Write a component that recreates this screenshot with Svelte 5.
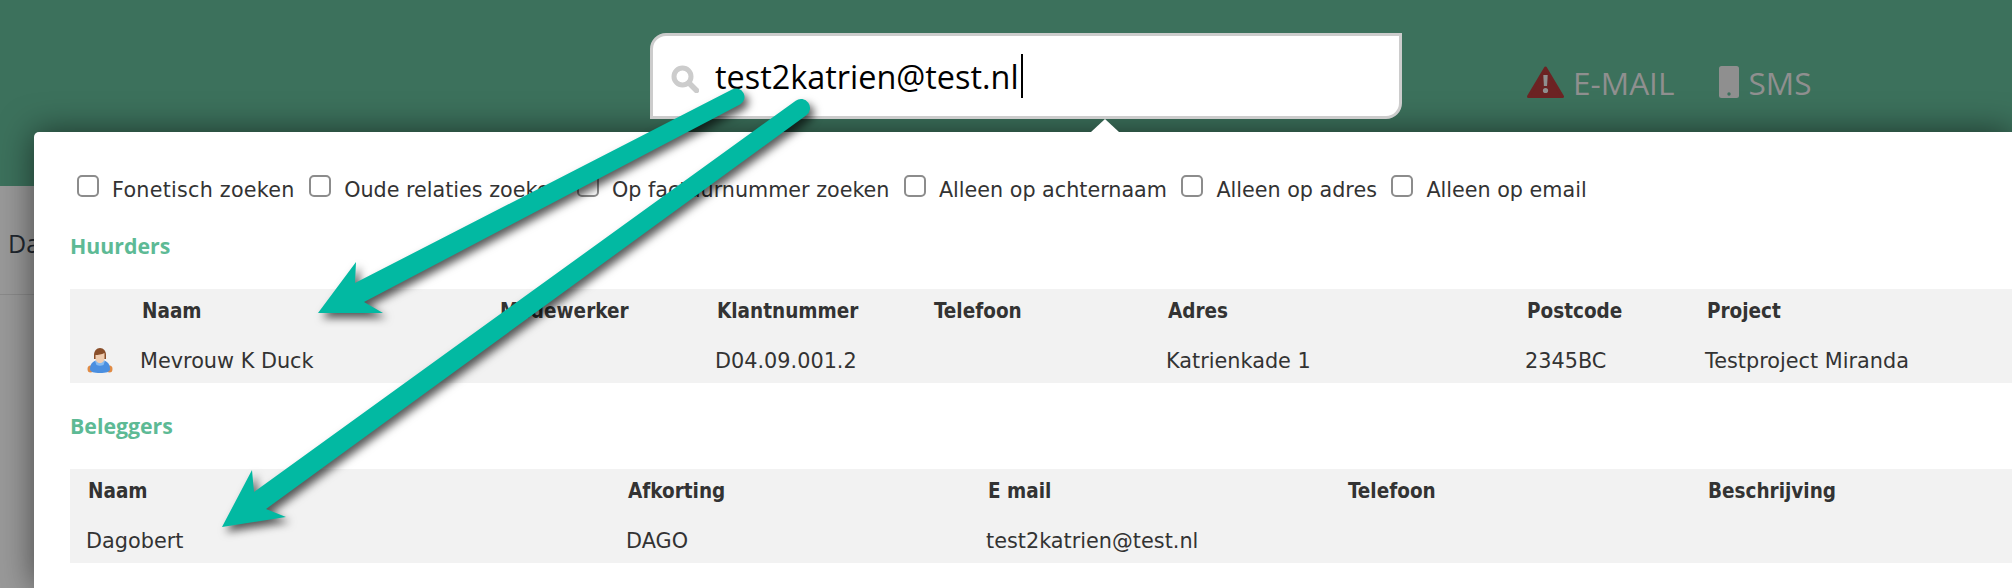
<script>
  const options = [
    'Fonetisch zoeken',
    'Oude relaties zoeken',
    'Op factuurnummer zoeken',
    'Alleen op achternaam',
    'Alleen op adres',
    'Alleen op email',
  ];
  const huurders = ['Naam', 'Medewerker', 'Klantnummer', 'Telefoon', 'Adres', 'Postcode', 'Project'];
  const huurder = ['Mevrouw K Duck', '', 'D04.09.001.2', '', 'Katrienkade 1', '2345BC', 'Testproject Miranda'];
  const beleggers = ['Naam', 'Afkorting', 'E mail', 'Telefoon', 'Beschrijving'];
  const belegger = ['Dagobert', 'DAGO', 'test2katrien@test.nl', '', ''];
</script>

<div class="page">
  <header>
    <div class="search">
      <svg class="loupe" viewBox="0 0 28 28" width="28" height="28">
        <circle cx="11.5" cy="11.5" r="8.5" fill="none" stroke="#ccc" stroke-width="5" />
        <path d="M18 18l7.5 7.5" stroke="#ccc" stroke-width="5.5" stroke-linecap="round" />
      </svg>
      <span class="query">test2katrien@test.nl</span><span class="caret"></span>
    </div>
    <div class="alerts">
      <span class="alert">
        <svg viewBox="0 0 37 32" width="37" height="32">
          <path d="M18.5 2L35.5 30.5H1.5z" fill="#6c2323" stroke="#6c2323" stroke-width="3" stroke-linejoin="round" />
          <path d="M16.3 9h4.4l-.6 11h-3.2z" fill="#8f8f8f" />
          <circle cx="18.5" cy="24.5" r="2.6" fill="#8f8f8f" />
        </svg>
        E-MAIL
      </span>
      <span class="alert">
        <svg viewBox="0 0 20 32" width="20" height="32">
          <rect width="20" height="32" rx="2.5" fill="#8f8f8f" />
          <circle cx="10" cy="28" r="1.7" fill="#3c705c" />
        </svg>
        SMS
      </span>
    </div>
  </header>

  <div class="below">
    <div class="crumb">Da</div>
  </div>

  <div class="panel">
    <div class="options">
      {#each options as option}
        <label><input type="checkbox" /><span>{option}</span></label>
      {/each}
    </div>

    <h3 class="first">Huurders</h3>
    <div class="table">
      <div class="row head huurders">
        <span></span>
        {#each huurders as cell}<span>{cell}</span>{/each}
      </div>
      <div class="row huurders">
        <span class="person">
          <svg viewBox="0 0 26 26" width="26" height="26">
            <ellipse cx="3.500" cy="21" rx="3" ry="3.500" fill="#e08b45" />
            <ellipse cx="22.500" cy="21" rx="3" ry="3.500" fill="#e08b45" />
            <path d="M3 21c0-6 4-9 10-9s10 3 10 9c0 3-4 4-10 4s-10-1-10-4z" fill="#4a8fe0" />
            <path d="M8 13h10l-1.500 4c-2 1-5 1-7 0z" fill="#86bbf0" />
            <path d="M7 7c0-4 2.500-7 6-7s6 3 6 7v4H7z" fill="#8a4f2a" />
            <path d="M8.500 7c2.500 0 6-.5 9-2v5c0 3-2 5-4.500 5s-4.500-2-4.500-5z" fill="#f0cdb0" />
          </svg>
        </span>
        {#each huurder as cell}<span>{cell}</span>{/each}
      </div>
    </div>

    <h3>Beleggers</h3>
    <div class="table">
      <div class="row head beleggers">
        {#each beleggers as cell}<span>{cell}</span>{/each}
      </div>
      <div class="row beleggers">
        {#each belegger as cell}<span>{cell}</span>{/each}
      </div>
    </div>
  </div>

  <!-- annotation arrows drawn on top of the screenshot -->
  <svg class="arrows" viewBox="0 0 2012 588" width="2012" height="588">
    <path d="M318 313L356 262L355 283L732 89.500A8.500 8.500 0 0 1 740 104.500L364 302L383 313z" fill="#02b9a2" />
    <path d="M222 527L252 470L254 492L795.700 100.700A9 9 0 0 1 806.300 115.300L266 509L286 517z" fill="#02b9a2" />
  </svg>
</div>

<style>
  :global(body) {
    margin: 0;
    background: #999;
  }
  .page {
    position: relative;
    width: 2012px;
    height: 588px;
    overflow: hidden;
    font-family: "DejaVu Sans", sans-serif;
    color: #333;
  }

  header {
    display: flex;
    align-items: flex-start;
    height: 186px;
    box-sizing: border-box;
    padding: 33px 0 0 650px;
    background: #3c715c;
  }
  .search {
    position: relative;
    z-index: 3;
    display: flex;
    align-items: center;
    box-sizing: border-box;
    width: 752px;
    height: 86px;
    padding: 0 0 0 18px;
    background: #fff;
    border: 3px solid #ccc;
    border-radius: 16px 0 16px 0;
  }
  .search::after {
    content: "";
    position: absolute;
    left: 438px;
    top: 83px;
    border-left: 14px solid transparent;
    border-right: 14px solid transparent;
    border-bottom: 13px solid #fff;
  }
  .loupe {
    margin: 6px 16px 0 0;
  }
  .query {
    font-family: "Open Sans", sans-serif;
    font-size: 32.4px;
    color: #000;
  }
  .caret {
    width: 2px;
    height: 44px;
    margin-left: 2px;
    background: #000;
  }
  .alerts {
    position: relative;
    z-index: 3;
    display: flex;
    gap: 45px;
    margin: 33px 0 0 125px;
  }
  .alert {
    display: flex;
    align-items: center;
    gap: 9px;
    height: 32px;
    font-family: "Open Sans", sans-serif;
    font-size: 31.6px;
    color: #8f8f8f;
  }

  .below {
    height: 402px;
    background: #999;
  }
  .crumb {
    height: 109px;
    box-sizing: border-box;
    padding: 40px 0 0 8px;
    border-bottom: 1px solid #8a8a8a;
    font-family: "Open Sans", sans-serif;
    font-size: 25px;
    line-height: 34px;
    color: #20262e;
  }

  .panel {
    position: absolute;
    z-index: 2;
    left: 34px;
    top: 132px;
    right: 0;
    bottom: 0;
    padding: 45px 0 0 36px;
    background: #fff;
    border-top-left-radius: 5px;
    box-shadow: 0 0 34px rgba(0, 0, 0, 0.55);
  }
  .options {
    display: flex;
    gap: 14.5px;
    height: 26px;
    padding-left: 7px;
    font-size: 20.7px;
  }
  .options label {
    display: flex;
    align-items: center;
    gap: 13px;
    white-space: nowrap;
  }
  .options label:first-child {
    letter-spacing: 0.25px;
  }
  .options input {
    appearance: none;
    width: 22px;
    height: 22px;
    margin: 0 0 9px;
    background: #fff;
    border: 2px solid #8c8c8c;
    border-radius: 5px;
  }

  h3 {
    height: 30px;
    margin: 28px 0 28px;
    font-family: "Open Sans", sans-serif;
    font-size: 21.3px;
    font-weight: 700;
    line-height: 30px;
    color: #5dba95;
  }

  .table {
    background: #f2f2f2;
  }
  .row {
    display: grid;
    box-sizing: border-box;
    height: 47px;
    padding-top: 2px;
    align-items: center;
    font-size: 20.8px;
    white-space: nowrap;
  }
  .head {
    padding: 0 0 3px;
    font-size: 20.5px;
    font-stretch: condensed;
    font-weight: 700;
  }
  .huurders {
    grid-template-columns: 54px 358px 217px 217px 234px 359px 180px 300px;
  }
  .beleggers {
    grid-template-columns: 540px 360px 360px 360px 360px;
  }
  .row span {
    padding-left: 16px;
  }
  .head span {
    padding-left: 18px;
  }
  .row .person {
    display: flex;
    padding-left: 17px;
  }

  .arrows {
    position: absolute;
    z-index: 4;
    left: 0;
    top: 0;
    filter: drop-shadow(4px 5px 4px rgba(0, 0, 0, 0.65));
  }
</style>
